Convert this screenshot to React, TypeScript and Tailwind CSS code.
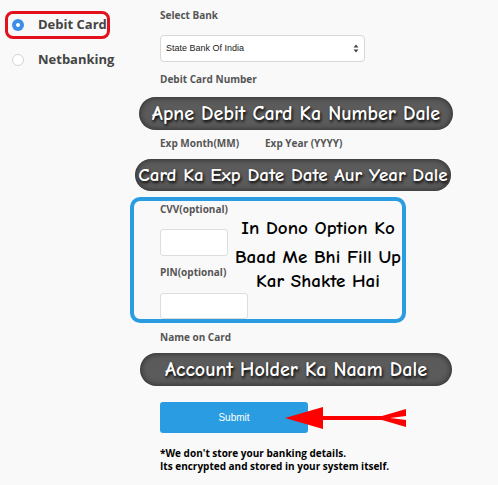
export default function App() {
  const comic = { fontFamily: '"Comic Sans MS", "Comic Neue", "DejaVu Sans", sans-serif', fontWeight: 700 }

  return (
    <div className="w-[498px] h-[485px] bg-[#f9f9f9] flex overflow-hidden font-['Open_Sans',sans-serif]">
      {/* Payment method column */}
      <div className="w-[130px] shrink-0 pt-[11px] pl-[5px] flex flex-col">
        <div className="w-[105px] h-[28px] border-[3px] border-[#e3111b] rounded-[8px] flex items-center pl-[4px]">
          <span className="w-[12px] h-[12px] rounded-full bg-[#3d8ee8] flex items-center justify-center">
            <span className="w-[4px] h-[4px] rounded-full bg-white" />
          </span>
          <span className="ml-[14px] text-[13px] font-bold text-[#444]">Debit Card</span>
        </div>
        <div className="h-[28px] mt-[7px] flex items-center pl-[7px]">
          <span className="w-[12px] h-[12px] rounded-full border border-[#d4d4d4] bg-white" />
          <span className="ml-[14px] text-[13px] font-bold text-[#444]">Netbanking</span>
        </div>
      </div>

      {/* Form column */}
      <div className="relative flex-1 flex flex-col pt-[8px]">
        <p className="ml-[30px] text-[10px] leading-[15px] font-bold text-[#555]">Select Bank</p>
        <div className="ml-[30px] mt-[12px] w-[205px] h-[27px] bg-white border border-[#d8d8d8] rounded-[4px] flex items-center justify-between px-[5px]">
          <span className="text-[9px] text-[#222] font-['Liberation_Sans',sans-serif]">State Bank Of India</span>
          <svg width="6" height="9" viewBox="0 0 6 9">
            <path d="M3 0.5 L5.5 3.5 H0.5 Z M3 8.5 L5.5 5.5 H0.5 Z" fill="#444" />
          </svg>
        </div>
        <p className="ml-[30px] mt-[10px] text-[10px] leading-[15px] font-bold text-[#555]">Debit Card Number</p>

        <div
          className="ml-[9px] mt-[10px] w-[314px] h-[33px] rounded-full bg-[#5b5b5b] shadow-[inset_0_0_6px_rgba(0,0,0,0.6)] flex items-center justify-center text-white text-[20px] whitespace-nowrap [text-shadow:1px_2px_3px_#000]"
          style={comic}
        >
          Apne Debit Card Ka Number Dale
        </div>

        <div className="ml-[30px] mt-[6px] flex text-[10px] leading-[15px] font-bold text-[#555]">
          <span className="w-[105px]">Exp Month(MM)</span>
          <span>Exp Year (YYYY)</span>
        </div>

        <div
          className="ml-[5px] mt-[8px] w-[316px] h-[32px] rounded-full bg-[#5b5b5b] shadow-[inset_0_0_6px_rgba(0,0,0,0.6)] flex items-center justify-center text-white text-[19px] whitespace-nowrap [text-shadow:1px_2px_3px_#000]"
          style={comic}
        >
          Card Ka Exp Date Date Aur Year Dale
        </div>

        {/* Optional fields box */}
        <div className="mt-[6px] w-[276px] h-[126px] border-[4px] border-[#2a9de2] rounded-[10px] flex">
          <div className="pl-[26px] pt-[1px] flex flex-col">
            <p className="text-[10px] leading-[15px] font-bold text-[#555]">CVV(optional)</p>
            <div className="mt-[12px] w-[68px] h-[28px] bg-white border border-[#ddd] rounded-[3px]" />
            <p className="mt-[9px] text-[10px] leading-[15px] font-bold text-[#555]">PIN(optional)</p>
            <div className="mt-[13px] w-[88px] h-[28px] bg-white border border-[#ddd] rounded-[3px]" />
          </div>
          <div
            className="flex-1 -ml-[14px] pt-[15px] flex flex-col items-center text-black text-[19px] leading-[24px] whitespace-nowrap"
            style={comic}
          >
            <span>In Dono Option Ko</span>
            <span className="mt-[5px]">Baad Me Bhi Fill Up</span>
            <span>Kar Shakte Hai</span>
          </div>
        </div>

        <p className="ml-[30px] mt-[7px] text-[10px] leading-[15px] font-bold text-[#555]">Name on Card</p>

        <div
          className="ml-[10px] mt-[8px] w-[312px] h-[33px] rounded-full bg-[#5b5b5b] shadow-[inset_0_0_6px_rgba(0,0,0,0.6)] flex items-center justify-center text-white text-[20px] whitespace-nowrap [text-shadow:1px_2px_3px_#000]"
          style={comic}
        >
          Account Holder Ka Naam Dale
        </div>

        <div className="relative ml-[30px] mt-[16px] w-[148px] h-[31px] bg-[#2a9de2] rounded-[3px] flex items-center justify-center">
          <span className="text-white text-[10px] font-['Liberation_Sans',sans-serif]">Submit</span>
          {/* Annotation arrow */}
          <svg className="absolute left-[124px] top-[3px]" width="124" height="26" viewBox="0 0 124 26">
            <path d="M1 13 L39 2 L39 11 L98 11 L122 4 L122 11 L106 13 L122 15 L122 22 L98 15 L39 15 L39 24 Z" fill="#f00" />
          </svg>
        </div>

        <p className="ml-[30px] mt-[14px] text-[10px] leading-[13px] font-bold text-black">
          *We don't store your banking details.
          <br />
          Its encrypted and stored in your system itself.
        </p>
      </div>
    </div>
  )
}
